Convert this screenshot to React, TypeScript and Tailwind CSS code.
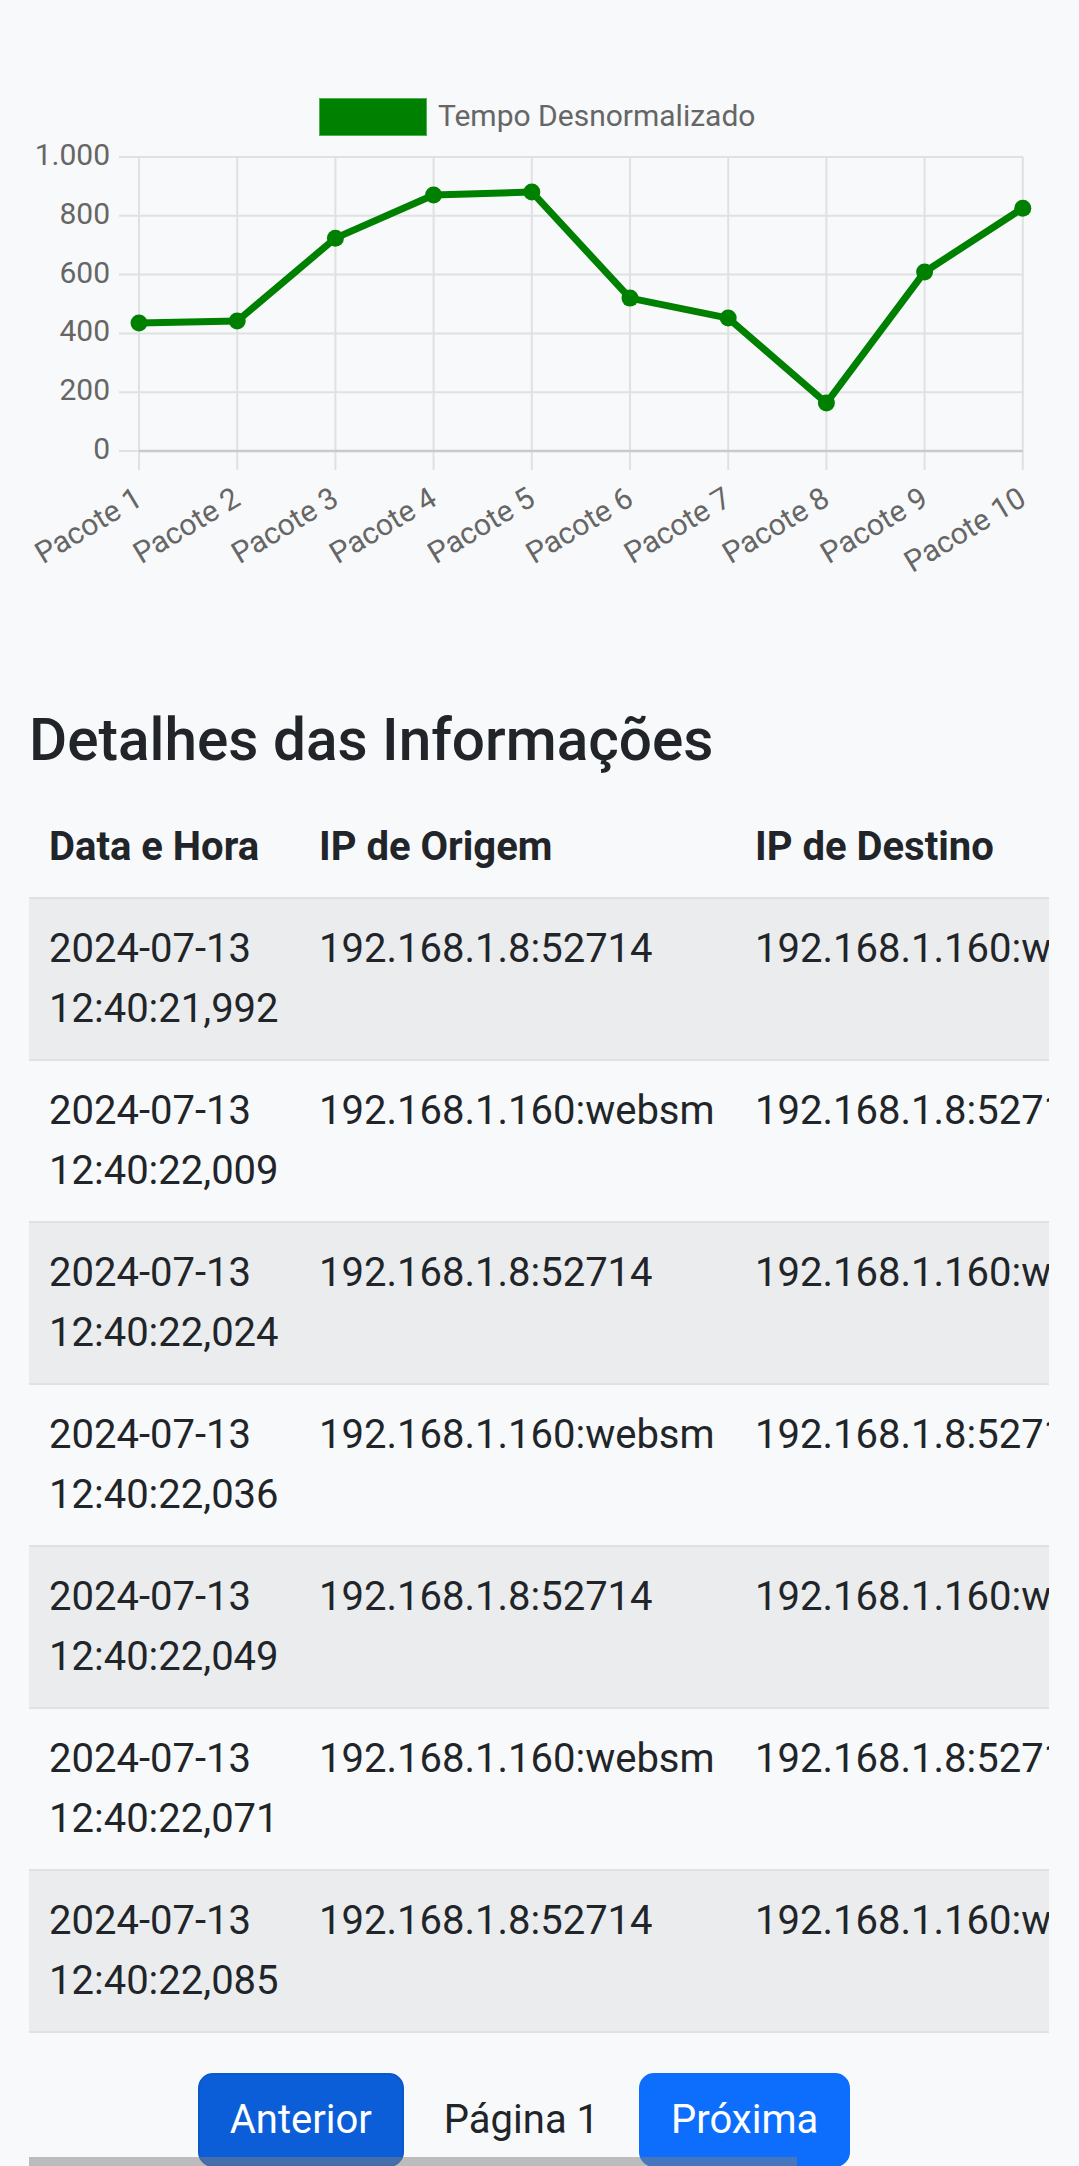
import React from "react"

const labels = Array.from({ length: 10 }, (_, i) => `Pacote ${i + 1}`)
const values = [435, 442, 724, 871, 881, 520, 452, 163, 609, 826]
const yTicks = [
    { v: 0, t: "0" },
    { v: 200, t: "200" },
    { v: 400, t: "400" },
    { v: 600, t: "600" },
    { v: 800, t: "800" },
    { v: 1000, t: "1.000" },
]

// chart area in page pixels
const X0 = 139
const DX = 98.2
const Y0 = 451
const YTOP = 157
const sx = (i: number) => X0 + i * DX
const sy = (v: number) => Y0 - (v * (Y0 - YTOP)) / 1000

const rows = [
    ["2024-07-13 12:40:21,992", "192.168.1.8:52714", "192.168.1.160:websm"],
    ["2024-07-13 12:40:22,009", "192.168.1.160:websm", "192.168.1.8:52714"],
    ["2024-07-13 12:40:22,024", "192.168.1.8:52714", "192.168.1.160:websm"],
    ["2024-07-13 12:40:22,036", "192.168.1.160:websm", "192.168.1.8:52714"],
    ["2024-07-13 12:40:22,049", "192.168.1.8:52714", "192.168.1.160:websm"],
    ["2024-07-13 12:40:22,071", "192.168.1.160:websm", "192.168.1.8:52714"],
    ["2024-07-13 12:40:22,085", "192.168.1.8:52714", "192.168.1.160:websm"],
]

function LineChart() {
    const points = values.map((v, i) => `${sx(i)},${sy(v)}`).join(" ")
    return (
        <svg width="1079" height="620" className="block" style={{ fontFamily: "Roboto, sans-serif" }}>
            {/* legend */}
            <rect x="319.5" y="98.5" width="107" height="37" fill="#008000" stroke="#4caf50" strokeWidth="1" />
            <text x="438" y="118" fontSize="30" fill="#666" dominantBaseline="middle">
                Tempo Desnormalizado
            </text>

            {/* vertical grid */}
            {labels.map((_, i) => (
                <line key={i} x1={sx(i)} x2={sx(i)} y1={YTOP} y2={470} stroke="#e0e1e2" strokeWidth="2" />
            ))}
            {/* horizontal grid */}
            {yTicks.map((t) => (
                <g key={t.v}>
                    <line x1={119} x2={sx(9)} y1={sy(t.v)} y2={sy(t.v)} stroke="#e0e1e2" strokeWidth="2" />
                    <text x="110" y={sy(t.v)} fontSize="30" fill="#666" textAnchor="end" dominantBaseline="middle">
                        {t.t}
                    </text>
                </g>
            ))}
            <line x1={X0} x2={sx(9)} y1={Y0} y2={Y0} stroke="#c9cacb" strokeWidth="2.5" />

            {/* x labels */}
            {labels.map((l, i) => (
                <text
                    key={l}
                    x={sx(i) + 1}
                    y={497}
                    fontSize="30"
                    fill="#666"
                    textAnchor="end"
                    dominantBaseline="middle"
                    transform={`rotate(-31 ${sx(i) + 1} 497)`}
                >
                    {l}
                </text>
            ))}

            {/* data */}
            <polyline points={points} fill="none" stroke="#008000" strokeWidth="7" strokeLinejoin="round" />
            {values.map((v, i) => (
                <circle key={i} cx={sx(i)} cy={sy(v)} r="8.5" fill="#008000" />
            ))}
        </svg>
    )
}

export default function App() {
    return (
        <div className="relative h-[2166px] w-full overflow-hidden bg-[#f8f9fa] font-[Roboto,sans-serif] text-[#212529]">
            <LineChart />

            <div className="px-[29px]">
                <h2 className="mt-[85px] mb-[22px] text-[58.5px] font-medium leading-[70px]">Detalhes das Informações</h2>

                <div className="w-[1020px] overflow-hidden">
                    <table className="w-[1356px] table-fixed border-collapse text-[40px] leading-[60px]">
                        <colgroup>
                            <col className="w-[270px]" />
                            <col className="w-[436px]" />
                            <col className="w-[650px]" />
                        </colgroup>
                        <thead>
                            <tr className="border-b-2 border-[#dee2e6]">
                                <th className="p-5 text-left font-bold">Data e Hora</th>
                                <th className="p-5 text-left font-bold">IP de Origem</th>
                                <th className="p-5 text-left font-bold">IP de Destino</th>
                            </tr>
                        </thead>
                        <tbody>
                            {rows.map((r, i) => (
                                <tr
                                    key={i}
                                    className={`border-b-2 border-[#dee2e6] ${i % 2 === 0 ? "bg-[#ebecee]" : "bg-[#f8f9fa]"}`}
                                >
                                    <td className="p-5 align-top">{r[0]}</td>
                                    <td className="p-5 align-top whitespace-nowrap">{r[1]}</td>
                                    <td className="p-5 align-top whitespace-nowrap">{r[2]}</td>
                                </tr>
                            ))}
                        </tbody>
                    </table>
                </div>

                <div className="mt-10 flex items-center justify-center pr-[31px] text-[40px] leading-[60px]">
                    <button className="rounded-[15px] border-2 border-[#0a58ca] bg-[#0b5ed7] px-[30px] py-[15px] text-white">
                        Anterior
                    </button>
                    <span className="mx-10">Página 1</span>
                    <button className="rounded-[15px] border-2 border-[#0d6efd] bg-[#0d6efd] px-[30px] py-[15px] text-white">
                        Próxima
                    </button>
                </div>
            </div>

            {/* overlay scrollbar of the table container */}
            <div className="absolute bottom-0 left-[29px] h-[9px] w-[768px] bg-[rgba(128,128,128,0.5)]" />
        </div>
    )
}
